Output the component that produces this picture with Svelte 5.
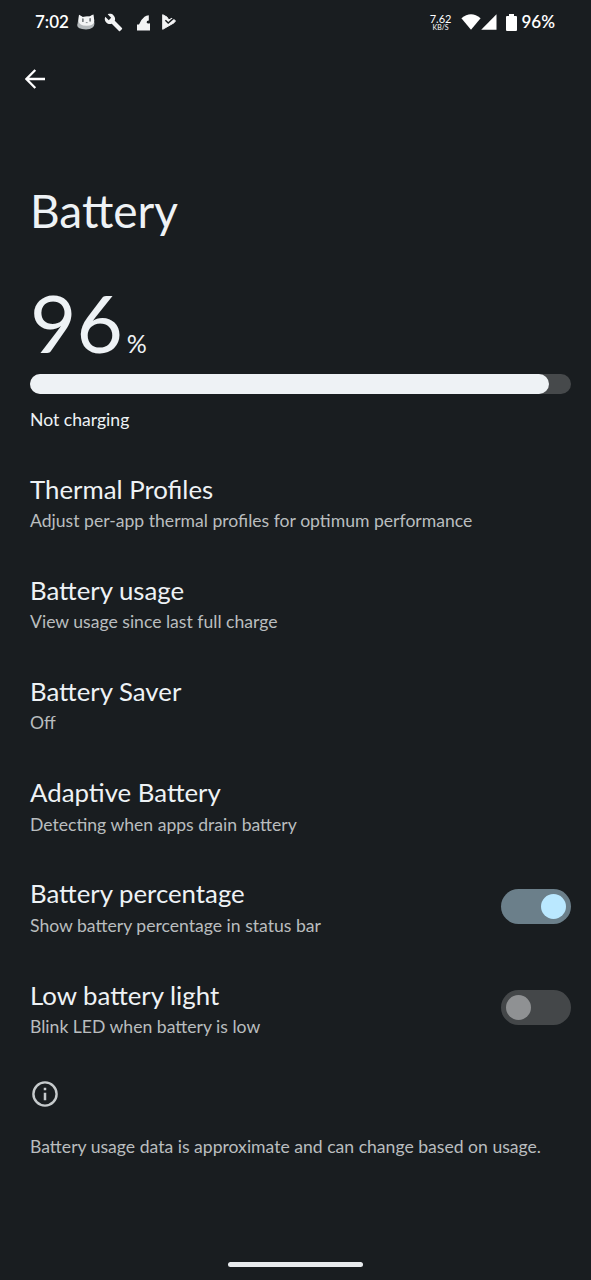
<script>
    let level = 96;

    let items = [
        { title: 'Thermal Profiles', summary: 'Adjust per-app thermal profiles for optimum performance' },
        { title: 'Battery usage', summary: 'View usage since last full charge' },
        { title: 'Battery Saver', summary: 'Off' },
        { title: 'Adaptive Battery', summary: 'Detecting when apps drain battery' },
        { title: 'Battery percentage', summary: 'Show battery percentage in status bar', toggle: true, on: true },
        { title: 'Low battery light', summary: 'Blink LED when battery is low', toggle: true, on: false }
    ];
</script>

<div class="screen">
    <div class="status">
        <span class="clock">7:02</span>
        <svg class="cat" width="18" height="16" viewBox="0 0 18 16">
            <path d="M2 1 5.5 3Q9 2 12.5 2.6L16.3.6 17 7Q19.4 15 9 15.4-1.6 15.4.6 9.5Z" fill="#b4b9bc" />
            <path d="M2 .8 5.8 3Q9 2 12.5 2.6L16.3.4 17.3 6.5Q17.5 11.8 9.5 11.8 2 11.8 1.6 7Z" fill="#f3f4f5" />
            <path d="M5.9 5v2.4M13.1 4.6V7" stroke="#5b6165" stroke-width="1.4" stroke-linecap="round" />
            <path d="M8.8 8.6h1.8" stroke="#8b9195" />
        </svg>
        <svg class="wrench" width="19" height="19" viewBox="0 0 24 24">
            <path d="M22.7 19l-9.1-9.1c.9-2.3.4-5-1.5-6.9-2-2-5-2.4-7.4-1.3L9 6 6 9 1.6 4.7C.4 7.1.9 10.1 2.9 12.1c1.9 1.9 4.6 2.4 6.9 1.5l9.1 9.1c.4.4 1 .4 1.4 0l2.3-2.3c.5-.4.5-1.1.1-1.4z" fill="#f3f4f5" />
        </svg>
        <svg class="shape" width="14" height="16" viewBox="0 0 14 16">
            <path d="M0 15.5V9.5H2Q4 4.5 7.5 1.8 9.2.3 11.8.3V5.5Q9.4 5.6 9.6 7.6 10.2 9 13 8.3V15.5Z" fill="#f3f4f5" />
        </svg>
        <svg class="play" width="14" height="16" viewBox="0 0 14 16">
            <path d="M.7.7 5 3.1 6.8 5.9 10 4.2 13.5 6.8 12 8.8.7 15.3Z" fill="#f3f4f5" stroke="#f3f4f5" stroke-linejoin="round" />
            <path d="M3.4 6.2 6.2 9 12.6 3.4" fill="none" stroke="#191d20" stroke-width="1.5" />
        </svg>

        <div class="speed">
            <span>7.62</span>
            <small>KB/S</small>
        </div>
        <svg class="wifi" width="20" height="16" viewBox="0 0 20 16">
            <path d="M.4 4.2Q10-3.6 19.6 4.2L10 15.8Z" fill="#fff" />
        </svg>
        <svg class="signal" width="16" height="16" viewBox="0 0 16 16">
            <path d="M15.5.3V15.7H.2Z" fill="#fff" />
        </svg>
        <svg class="cell" width="11" height="17" viewBox="0 0 11 17">
            <path d="M3 0H8V2H10Q11 2 11 3V15.8Q11 17 10 17H1Q0 17 0 15.8V3Q0 2 1 2H3Z" fill="#fff" />
        </svg>
        <span class="percent">{level}%</span>
    </div>

    <svg class="back" width="20" height="20" viewBox="0 0 20 20">
        <path d="M20 10H1.5M10.3 1 1.4 10 10.3 19" fill="none" stroke="#fff" stroke-width="2.3" />
    </svg>

    <h1>Battery</h1>

    <div class="level">
        <span class="number">{level}</span>
        <span class="unit">%</span>
    </div>
    <div class="bar">
        <div class="fill" style="width: {level}%"></div>
    </div>
    <div class="state">Not charging</div>

    <div class="items">
        {#each items as item (item.title)}
            <div class="item">
                <div class="text">
                    <h2>{item.title}</h2>
                    <p>{item.summary}</p>
                </div>

                {#if item.toggle}
                    <div class="switch" class:on={item.on}>
                        <div class="thumb"></div>
                    </div>
                {/if}
            </div>
        {/each}
    </div>

    <svg class="about" width="26" height="26" viewBox="0 0 26 26">
        <circle cx="13" cy="13" r="11.6" fill="none" stroke="#c6cacc" stroke-width="2.4" />
        <path d="M13 11.8V19.3M13 6.8V9.3" stroke="#c6cacc" stroke-width="2.5" />
    </svg>
    <p class="note">Battery usage data is approximate and can change based on usage.</p>

    <div class="home"></div>
</div>

<style>
    :global(body) {
        background: #191d20;
    }

    .screen {
        box-sizing: border-box;
        height: 1280px;
        padding: 0 20.5px 13px 30px;
        display: flex;
        flex-direction: column;
        background: #191d20;
        color: #eef2f5;
        font-family: Lato, sans-serif;
    }

    svg {
        display: block;
        flex: none;
    }

    h1, h2, p {
        margin: 0;
        font-weight: 400;
    }

    .status {
        height: 44px;
        display: flex;
        align-items: center;
        margin: 0 -20.5px 0 -30px;
        padding: 0 36px 0 35px;
        font-size: 17px;
        font-weight: 600;
        color: #fff;
    }

    .clock {
        width: 42px;
        padding-bottom: 2px;
    }

    .wrench {
        margin-left: 9px;
    }

    .shape {
        margin: 2px 0 0 14px;
    }

    .play {
        margin-left: 11px;
    }

    .speed {
        display: flex;
        flex-direction: column;
        align-items: center;
        margin-left: auto;
        font-size: 11px;
        line-height: 11px;
        font-weight: 400;
    }

    .speed small {
        font-size: 7px;
        line-height: 7px;
    }

    .wifi {
        margin-left: 10px;
    }

    .cell {
        margin-left: 9px;
    }

    .percent {
        margin-left: 4px;
        padding-bottom: 2px;
    }

    .back {
        margin: 25px 0 0 -5px;
    }

    h1 {
        margin-top: 92px;
        font-size: 46px;
        line-height: 60px;
    }

    .level {
        display: flex;
        align-items: baseline;
        height: 80px;
        margin-top: 41px;
    }

    .number {
        font-size: 80px;
        line-height: 80px;
    }

    .unit {
        margin-left: 4px;
        font-size: 25px;
    }

    .bar {
        height: 20px;
        margin-top: 12px;
        border-radius: 10px;
        background: #46494b;
    }

    .fill {
        height: 20px;
        border-radius: 10px;
        background: #eef2f5;
    }

    .state {
        margin-top: 14px;
        font-size: 17.6px;
        line-height: 24px;
    }

    .items {
        margin-top: 20px;
    }

    .item {
        height: 101.2px;
        display: flex;
        justify-content: space-between;
        align-items: center;
    }

    h2 {
        font-size: 25.8px;
        line-height: 34px;
    }

    p {
        font-size: 17.6px;
        line-height: 28px;
        color: #b9bdbf;
    }

    .text p {
        padding-top: 1.4px;
        margin-bottom: -1.4px;
    }

    .switch {
        box-sizing: border-box;
        width: 70px;
        height: 35px;
        display: flex;
        margin-bottom: 2px;
        padding: 5px;
        border-radius: 18px;
        background: #444749;
    }

    .thumb {
        width: 25px;
        height: 25px;
        border-radius: 50%;
        background: #8f9193;
    }

    .on {
        justify-content: flex-end;
        background: #6b7f8a;
    }

    .on .thumb {
        background: #bae8ff;
    }

    .about {
        margin: 22px 0 0 2px;
    }

    .note {
        margin-top: 26px;
    }

    .home {
        width: 135px;
        height: 5px;
        margin: auto auto 0 198px;
        border-radius: 3px;
        background: #e8ebed;
    }
</style>
